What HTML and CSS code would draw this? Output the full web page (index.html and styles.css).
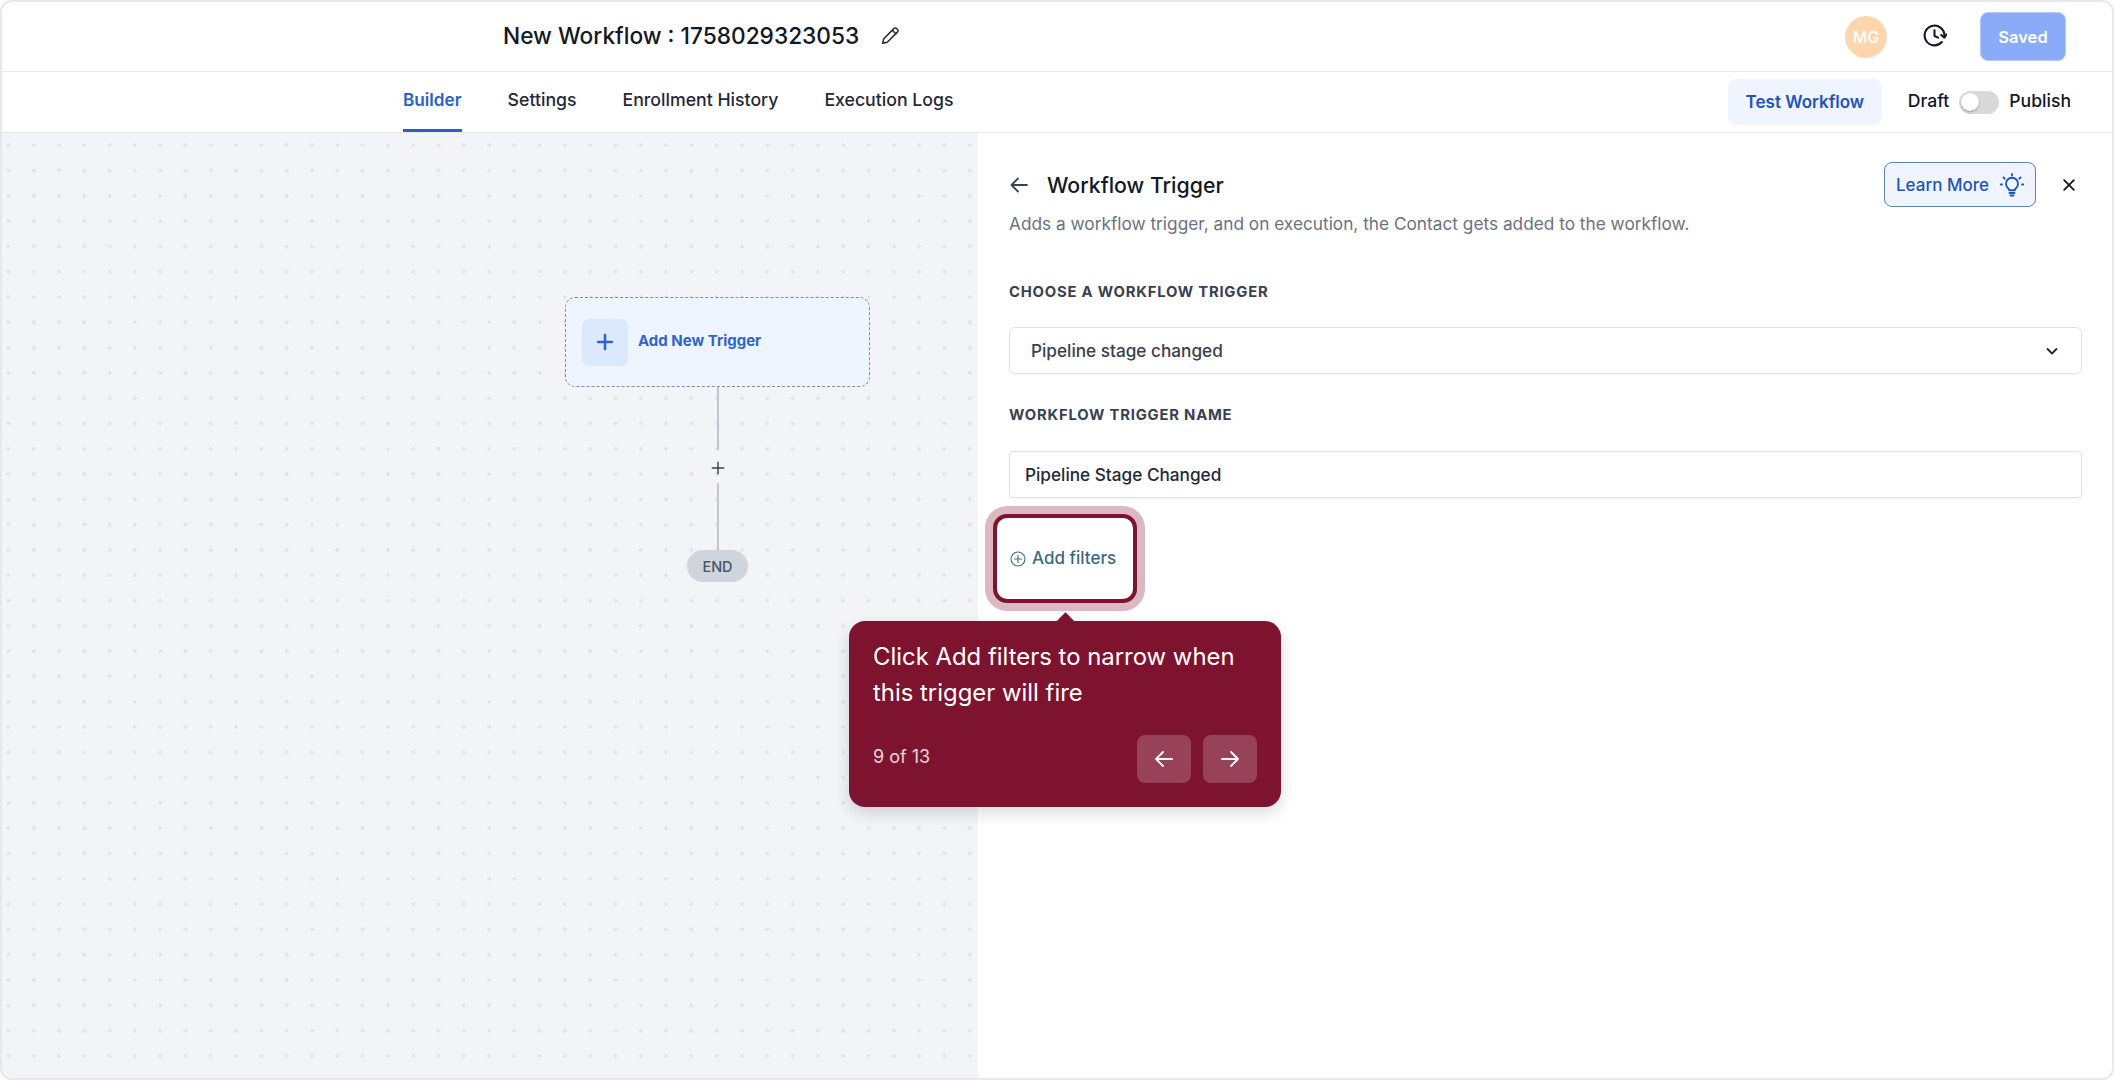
FILE: index.html
```html
<!DOCTYPE html>
<html lang="en">

<head>
   <meta charset="UTF-8">
   <title>New Workflow</title>
   <link rel="stylesheet" href="styles.css">
</head>

<body>
   <div class="frame">
      <header class="topbar">
         <div class="title-group">
            <span class="title">New Workflow : 1758029323053</span>
            <svg class="edit-icon" viewBox="0 0 24 24" fill="none" stroke="#1f2937" stroke-width="1.6" stroke-linecap="round" stroke-linejoin="round">
               <path d="M4 20l1.2-5L16.5 3.7a1.8 1.8 0 0 1 2.6 0l1.2 1.2a1.8 1.8 0 0 1 0 2.6L9 18.8 4 20z" />
               <path d="M14.5 5.7l3.8 3.8" />
            </svg>
         </div>
         <div class="top-actions">
            <div class="avatar">MG</div>
            <svg class="history-icon" viewBox="0 0 24 24" fill="none" stroke="#111827" stroke-width="2" stroke-linecap="round" stroke-linejoin="round">
               <path d="M21.5 12a9.5 9.5 0 1 0-2.4 6.3" />
               <path d="M12 7v5.5l3.5 1.5" />
               <path d="M18.5 11.5l3 2.5 2-3" />
            </svg>
            <button class="saved-btn">Saved</button>
         </div>
      </header>

      <nav class="tabbar">
         <div class="tabs">
            <a class="tab tab-active">Builder</a>
            <a class="tab">Settings</a>
            <a class="tab">Enrollment History</a>
            <a class="tab">Execution Logs</a>
         </div>
         <div class="tab-actions">
            <button class="test-btn">Test Workflow</button>
            <span class="toggle-label">Draft</span>
            <span class="toggle"><span class="toggle-knob"></span></span>
            <span class="toggle-label">Publish</span>
         </div>
      </nav>

      <main class="workspace">
         <section class="canvas">
            <div class="flow">
               <div class="trigger-node">
                  <span class="trigger-plus">
                     <svg viewBox="0 0 24 24" fill="none" stroke="#3164c8" stroke-width="2.8" stroke-linecap="round">
                        <path d="M12 4.5v15M4.5 12h15" />
                     </svg>
                  </span>
                  <span class="trigger-text">Add New Trigger</span>
               </div>
               <div class="connector connector-top"></div>
               <svg class="add-step" viewBox="0 0 16 16" fill="none" stroke="#374151" stroke-width="1.6" stroke-linecap="round">
                  <path d="M8 1.5v13M1.5 8h13" />
               </svg>
               <div class="connector connector-bottom"></div>
               <div class="end-pill">END</div>
            </div>
         </section>

         <aside class="panel">
            <div class="panel-head">
               <svg class="back-icon" viewBox="0 0 20 20" fill="none" stroke="#374151" stroke-width="1.8" stroke-linecap="round" stroke-linejoin="round">
                  <path d="M18 10H2.5M9 3.5L2.5 10 9 16.500" />
               </svg>
               <h1 class="panel-title">Workflow Trigger</h1>
               <button class="learn-btn">
                  Learn More
                  <svg class="bulb-icon" viewBox="0 0 24 24" fill="none" stroke="#1f55b8" stroke-width="1.9" stroke-linecap="round" stroke-linejoin="round">
                     <path d="M8.300 15.500a6 6 0 1 1 7.400 0c-.6.5-.9 1-.9 1.800H9.200c0-.8-.3-1.300-.9-1.800z" />
                     <path d="M9.500 20h5M10.500 22.500h3" />
                     <path d="M12 1v1.500M3.500 4.500l1.200 1.200M20.500 4.500l-1.200 1.200M.5 11.500H2M22 11.500h1.500" />
                  </svg>
               </button>
               <svg class="close-icon" viewBox="0 0 16 16" fill="none" stroke="#111827" stroke-width="2.1" stroke-linecap="round">
                  <path d="M2.500 2.500l11 11M13.500 2.500l-11 11" />
               </svg>
            </div>
            <p class="panel-sub">Adds a workflow trigger, and on execution, the Contact gets added to the workflow.</p>

            <div class="field-label label-first">CHOOSE A WORKFLOW TRIGGER</div>
            <div class="select-box">
               <span>Pipeline stage changed</span>
               <svg class="chevron" viewBox="0 0 16 16" fill="none" stroke="#1f2937" stroke-width="1.8" stroke-linecap="round" stroke-linejoin="round">
                  <path d="M3.500 6l4.500 4.500L12.500 6" />
               </svg>
            </div>

            <div class="field-label">WORKFLOW TRIGGER NAME</div>
            <div class="text-input">Pipeline Stage Changed</div>

            <button class="filter-btn">
               <svg class="filter-icon" viewBox="0 0 16 16" fill="none" stroke="#3a6a80" stroke-width="1.100" stroke-linecap="round">
                  <circle cx="8" cy="8" r="7" />
                  <path d="M8 4.500v7M4.500 8h7" />
               </svg>
               Add filters
            </button>
         </aside>
      </main>

      <div class="tour-tip">
         <span class="tip-arrow"></span>
         <p class="tip-text">Click Add filters to narrow when this trigger will fire</p>
         <div class="tip-foot">
            <span class="tip-count">9 of 13</span>
            <div class="tip-nav">
               <button class="tip-btn">
                  <svg viewBox="0 0 20 20" fill="none" stroke="#fff" stroke-width="1.800" stroke-linecap="round" stroke-linejoin="round">
                     <path d="M18 10H2M9 3l-7 7 7 7" />
                  </svg>
               </button>
               <button class="tip-btn">
                  <svg viewBox="0 0 20 20" fill="none" stroke="#fff" stroke-width="1.800" stroke-linecap="round" stroke-linejoin="round">
                     <path d="M2 10h16M11 3l7 7-7 7" />
                  </svg>
               </button>
            </div>
         </div>
      </div>
   </div>
</body>

</html>
```

FILE: styles.css
```css
* {
   box-sizing: border-box;
}

body {
   margin: 0;
   height: 100vh;
   background-color: #fff;
   font-family: Inter, "Liberation Sans", sans-serif;
   overflow: hidden;
}

button {
   font-family: inherit;
   cursor: pointer;
}

.frame {
   position: relative;
   display: flex;
   flex-direction: column;
   height: 1080px;
   border: 2px solid #e6e8ec;
   border-radius: 12px;
   overflow: hidden;
}

/* Top bar */
.topbar {
   display: flex;
   align-items: center;
   justify-content: space-between;
   height: 70px;
   padding: 0 46px 0 501px;
   border-bottom: 1px solid #e8eaee;
   flex-shrink: 0;
}

.title-group {
   display: flex;
   align-items: center;
   gap: 20px;
   margin-bottom: 2px;
}

.title {
   font-size: 22.700px;
   font-weight: 500;
   color: #111827;
}

.edit-icon {
   width: 22px;
   height: 22px;
}

.top-actions {
   display: flex;
   align-items: center;
}

.avatar {
   display: flex;
   align-items: center;
   justify-content: center;
   width: 42px;
   height: 42px;
   border-radius: 50%;
   background-color: #fdd6ad;
   color: #fff;
   font-size: 16px;
   font-weight: 500;
}

.history-icon {
   width: 25px;
   height: 25px;
   margin: 0 33px 2px 35px;
}

.saved-btn {
   width: 86px;
   height: 49px;
   border: 1px solid #b4c9fb;
   border-radius: 8px;
   background-color: #8aabf8;
   color: #fff;
   font-size: 16.500px;
   font-weight: 600;
}

/* Tabs */
.tabbar {
   display: flex;
   align-items: stretch;
   justify-content: space-between;
   height: 61px;
   padding: 0 41px 0 401px;
   border-bottom: 1px solid #e8eaee;
   flex-shrink: 0;
}

.tabs {
   display: flex;
   gap: 46px;
}

.tab {
   display: flex;
   align-items: center;
   padding-bottom: 3px;
   border-bottom: 3px solid transparent;
   font-size: 17.700px;
   font-weight: 500;
   color: #1f2937;
}

.tab-active {
   border-bottom-color: #2b5fc4;
   color: #2b5fc4;
   font-size: 17.200px;
   font-weight: 600;
}

.tab-actions {
   display: flex;
   align-items: center;
}

.test-btn {
   width: 154px;
   height: 46px;
   margin-right: 26px;
   border: none;
   border-radius: 8px;
   background-color: #eff4ff;
   color: #1f55b8;
   font-size: 17px;
   font-weight: 600;
}

.toggle-label {
   margin-bottom: 3px;
   font-size: 17.600px;
   font-weight: 500;
   color: #111827;
}

.toggle {
   display: flex;
   align-items: center;
   width: 40px;
   height: 23px;
   margin: 0 10px;
   padding: 2px;
   border-radius: 12px;
   background-color: #d9d9d9;
}

.toggle-knob {
   width: 18px;
   height: 18px;
   border-radius: 50%;
   background-color: #fff;
   box-shadow: 0 1px 2px rgba(0, 0, 0, 0.3);
}

/* Workspace */
.workspace {
   display: flex;
   flex: 1;
   min-height: 0;
}

.canvas {
   position: relative;
   width: 976px;
   flex-shrink: 0;
   background-color: #f2f4f8;
   background-image: radial-gradient(circle, #e0e3e9 1.500px, transparent 1.900px);
   background-size: 25.300px 25.300px;
   background-position: -6.250px -0.450px;
}

.flow {
   position: absolute;
   left: 563px;
   top: 164px;
   display: flex;
   flex-direction: column;
   align-items: center;
   width: 305px;
}

.trigger-node {
   display: flex;
   align-items: center;
   align-self: stretch;
   gap: 10px;
   height: 90px;
   padding: 0 16px;
   border: 1px dashed #7a8db5;
   border-radius: 10px;
   background-color: #eff5ff;
}

.trigger-plus {
   display: flex;
   align-items: center;
   justify-content: center;
   width: 46px;
   height: 47px;
   border-radius: 7px;
   background-color: #dbe9fe;
}

.trigger-plus svg {
   width: 22px;
   height: 22px;
}

.trigger-text {
   padding-bottom: 3px;
   font-size: 15px;
   font-weight: 700;
   color: #3164c8;
}

.connector {
   width: 2px;
   background-color: #c2c5cb;
}

.connector-top {
   height: 63px;
}

.connector-bottom {
   height: 67px;
}

.add-step {
   width: 14px;
   height: 14px;
   margin: 11px 0 8px;
}

.end-pill {
   display: flex;
   align-items: center;
   justify-content: center;
   width: 61px;
   height: 32px;
   border-radius: 16px;
   background-color: #d0d5dd;
   color: #475467;
   font-size: 14.500px;
   font-weight: 500;
}

/* Side panel */
.panel {
   flex: 1;
   padding: 29px 30px 0 31px;
   background-color: #fff;
}

.panel-head {
   display: flex;
   align-items: center;
   height: 45px;
}

.back-icon {
   width: 20px;
   height: 20px;
   margin-right: 18px;
}

.panel-title {
   flex: 1;
   margin: 0;
   font-size: 21.300px;
   font-weight: 500;
   color: #111827;
}

.learn-btn {
   display: flex;
   align-items: center;
   gap: 11px;
   width: 152px;
   height: 45px;
   padding: 0 10px 0 11px;
   border: 1.500px solid #5c82c0;
   border-radius: 8px;
   background-color: #eff4ff;
   color: #1f55b8;
   font-size: 17px;
   font-weight: 500;
   white-space: nowrap;
}

.bulb-icon {
   width: 24px;
   height: 24px;
}

.close-icon {
   width: 14px;
   height: 14px;
   margin: 0 6px 0 26px;
}

.panel-sub {
   margin: 5px 0 0;
   font-size: 17.250px;
   line-height: 24px;
   color: #6b7280;
}

.field-label {
   margin-top: 31px;
   font-size: 14.800px;
   line-height: 20px;
   font-weight: 700;
   letter-spacing: 0.8px;
   color: #374151;
}

.label-first {
   margin-top: 46px;
}

.select-box,
.text-input {
   display: flex;
   align-items: center;
   height: 47px;
   margin-top: 25px;
   border: 1px solid #dfe2e6;
   border-radius: 6px;
   font-size: 17.200px;
   box-shadow: 0 1px 2px rgba(16, 24, 40, 0.05);
}

.text-input {
   margin-top: 26px;
}

.select-box {
   justify-content: space-between;
   padding: 0 21px;
   color: #374151;
   font-weight: 500;
}

.chevron {
   width: 16px;
   height: 16px;
}

.text-input {
   padding: 0 15px;
   border-radius: 4px;
   color: #1f2937;
   font-weight: 500;
}

.filter-btn {
   display: flex;
   align-items: center;
   gap: 6px;
   width: 144px;
   height: 89px;
   margin: 16px 0 0 -16px;
   padding: 0 0 2px 13px;
   border: 4px solid #7e132f;
   border-radius: 14px;
   background-color: #fff;
   box-shadow: 0 0 0 8px #dcb9c2;
   color: #3a6a80;
   font-size: 17px;
   font-weight: 500;
}

.filter-icon {
   width: 16px;
   height: 16px;
   margin-top: 2px;
}

/* Tour tooltip */
.tour-tip {
   position: absolute;
   left: 847px;
   top: 619px;
   width: 432px;
   height: 186px;
   padding: 18px 24px 24px;
   border-radius: 16px;
   background-color: #7e132f;
   box-shadow: 0 6px 16px rgba(0, 0, 0, 0.15);
}

.tip-arrow {
   position: absolute;
   left: 210px;
   top: -6px;
   width: 13px;
   height: 13px;
   background-color: #7e132f;
   transform: rotate(45deg);
}

.tip-text {
   position: relative;
   margin: 0;
   font-size: 23.900px;
   line-height: 36px;
   color: #fff;
}

.tip-foot {
   display: flex;
   align-items: center;
   justify-content: space-between;
   margin-top: 24px;
}

.tip-count {
   margin-bottom: 6px;
   font-size: 18px;
   color: #ecd5db;
}

.tip-nav {
   display: flex;
   gap: 12px;
}

.tip-btn {
   display: flex;
   align-items: center;
   justify-content: center;
   width: 54px;
   height: 48px;
   border: none;
   border-radius: 8px;
   background-color: rgba(255, 255, 255, 0.2);
}

.tip-btn svg {
   width: 20px;
   height: 20px;
}
```
